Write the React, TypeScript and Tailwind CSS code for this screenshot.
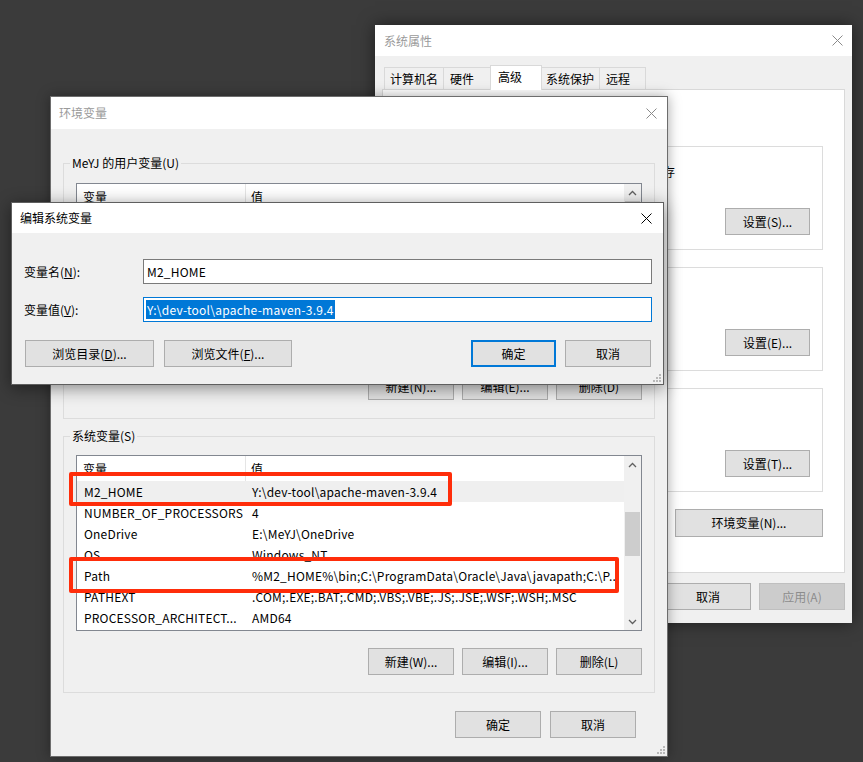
import React from 'react';

type Row = [string, string];

const CloseX = ({ color = '#000000' }: { color?: string }) => (
  <svg width="11" height="11" viewBox="0 0 11 11">
    <path d="M0.5 0.5 L10.5 10.5 M10.5 0.5 L0.5 10.5" stroke={color} strokeWidth="1" fill="none" />
  </svg>
);

const Chevron = ({ up }: { up?: boolean }) => (
  <svg width="9" height="6" viewBox="0 0 9 6">
    <path d={up ? 'M1 5 L4.5 1.5 L8 5' : 'M1 1 L4.5 4.5 L8 1'} stroke="#606060" strokeWidth="1.3" fill="none" />
  </svg>
);

const Grip = () => (
  <svg width="9" height="9" viewBox="0 0 9 9" fill="#b8b8b8" className="absolute right-[2px] bottom-[2px]">
    <rect x="7" y="1" width="2" height="2" />
    <rect x="4" y="4" width="2" height="2" />
    <rect x="7" y="4" width="2" height="2" />
    <rect x="1" y="7" width="2" height="2" />
    <rect x="4" y="7" width="2" height="2" />
    <rect x="7" y="7" width="2" height="2" />
  </svg>
);

const Btn = ({
  children,
  className = '',
  primary,
  disabled,
}: {
  children: React.ReactNode;
  className?: string;
  primary?: boolean;
  disabled?: boolean;
}) => (
  <button
    className={`h-[27px] shrink-0 flex items-center justify-center text-[12px] ${
      primary
        ? 'bg-[#e1e1e1] border-2 border-[#0078d7] text-black'
        : disabled
        ? 'bg-[#cccccc] border border-[#bfbfbf] text-[#8c8c8c]'
        : 'bg-[#e1e1e1] border border-[#adadad] text-black'
    } ${className}`}
  >
    {children}
  </button>
);

const VarList = ({
  rows,
  selected,
  className = '',
  thumbClass,
  children,
}: {
  rows: Row[];
  selected?: number;
  className?: string;
  thumbClass: string;
  children?: React.ReactNode;
}) => (
  <div className={`relative flex border border-[#828790] bg-white ${className}`}>
    <div className="flex-1 flex flex-col overflow-hidden">
      <div className="h-[25px] flex shrink-0">
        <div className="w-[169px] pl-[6px] border-r border-[#e5e5e5] flex items-center">变量</div>
        <div className="pl-[5px] flex items-center">值</div>
      </div>
      {rows.map(([name, value], i) => (
        <div
          key={name}
          className={`h-[21px] flex items-center shrink-0 tracking-[0.2px] ${i === selected ? 'bg-[#efefef]' : ''}`}
        >
          <div className="w-[169px] pl-[7px] whitespace-nowrap overflow-hidden">{name}</div>
          <div className="pl-[6px] whitespace-nowrap overflow-hidden">{value}</div>
        </div>
      ))}
    </div>
    {/* scrollbar */}
    <div className="w-[17px] bg-[#f0f0f0] flex flex-col shrink-0">
      <div className="h-[17px] flex items-center justify-center">
        <Chevron up />
      </div>
      <div className="flex-1">
        <div className={`mx-[1px] bg-[#cdcdcd] ${thumbClass}`} />
      </div>
      <div className="h-[17px] flex items-center justify-center">
        <Chevron />
      </div>
    </div>
    {children}
  </div>
);

const userRows: Row[] = [
  ['OneDrive', 'E:\\MeYJ\\OneDrive'],
  ['Path', 'C:\\Users\\MeYJ\\AppData\\Local\\Microsoft\\WindowsApps;'],
  ['TEMP', 'C:\\Users\\MeYJ\\AppData\\Local\\Temp'],
  ['TMP', 'C:\\Users\\MeYJ\\AppData\\Local\\Temp'],
];

const sysRows: Row[] = [
  ['M2_HOME', 'Y:\\dev-tool\\apache-maven-3.9.4'],
  ['NUMBER_OF_PROCESSORS', '4'],
  ['OneDrive', 'E:\\MeYJ\\OneDrive'],
  ['OS', 'Windows_NT'],
  ['Path', '%M2_HOME%\\bin;C:\\ProgramData\\Oracle\\Java\\javapath;C:\\P...'],
  ['PATHEXT', '.COM;.EXE;.BAT;.CMD;.VBS;.VBE;.JS;.JSE;.WSF;.WSH;.MSC'],
  ['PROCESSOR_ARCHITECT...', 'AMD64'],
];

const SystemWindow = () => (
  <div className="absolute left-[375px] top-[25px] w-[477px] h-[598px] flex flex-col bg-[#f0f0f0] shadow-[0_0_16px_rgba(0,0,0,0.5)]">
    <div className="h-[31px] shrink-0 bg-white flex items-center justify-between pl-[9px] pr-[9px]">
      <span className="text-[#9a9a9a]">系统属性</span>
      <CloseX color="#8a8a8a" />
    </div>
    <div className="flex-1 flex flex-col px-[7px] pt-[9px]">
      <div className="h-[25px] flex items-end pl-[2px]">
        <div className="w-[60px] h-[23px] border border-b-0 border-[#d9d9d9] flex items-center pl-[5px]">计算机名</div>
        <div className="w-[48px] h-[23px] -ml-px border border-b-0 border-[#d9d9d9] flex items-center pl-[6px]">硬件</div>
        <div className="relative z-10 w-[52px] h-[25px] -ml-px border border-b-0 border-[#d9d9d9] bg-white flex items-center pl-[7px] pb-[3px]">高级</div>
        <div className="w-[59px] h-[23px] -ml-px border border-b-0 border-[#d9d9d9] flex items-center pl-[4px]">系统保护</div>
        <div className="w-[47px] h-[23px] -ml-px border border-b-0 border-[#d9d9d9] flex items-center pl-[6px]">远程</div>
      </div>
      <div className="-mt-px h-[484px] bg-white border border-[#d9d9d9] flex flex-col pl-[11px] pr-[21px] pt-[11px]">
        <div className="h-[16px] pl-[6px] whitespace-nowrap">要进行大多数更改，你必须作为管理员登录。</div>
        <div className="mt-[29px] h-[104px] border border-[#dcdcdc] flex flex-col">
          <div className="pt-[17px] pl-[16px] whitespace-nowrap">视觉效果，处理器计划，内存使用，以及虚拟内存</div>
          <div className="flex-1" />
          <div className="flex justify-end pr-[12px] pb-[14px]">
            <Btn className="w-[85px]">设置(S)...</Btn>
          </div>
        </div>
        <div className="mt-[17px] h-[104px] border border-[#dcdcdc] flex flex-col">
          <div className="pt-[17px] pl-[16px] whitespace-nowrap">与登录帐户相关的桌面设置</div>
          <div className="flex-1" />
          <div className="flex justify-end pr-[12px] pb-[14px]">
            <Btn className="w-[85px]">设置(E)...</Btn>
          </div>
        </div>
        <div className="mt-[17px] h-[104px] border border-[#dcdcdc] flex flex-col">
          <div className="pt-[17px] pl-[16px] whitespace-nowrap">系统启动、系统故障和调试信息</div>
          <div className="flex-1" />
          <div className="flex justify-end pr-[12px] pb-[14px]">
            <Btn className="w-[85px]">设置(T)...</Btn>
          </div>
        </div>
        <div className="mt-[17px] flex justify-end">
          <Btn className="w-[148px] h-[28px]">环境变量(N)...</Btn>
        </div>
      </div>
      <div className="mt-[10px] flex justify-end gap-[8px]">
        <Btn className="w-[86px]">确定</Btn>
        <Btn className="w-[86px]">取消</Btn>
        <Btn className="w-[86px]" disabled>
          应用(A)
        </Btn>
      </div>
    </div>
  </div>
);

const EnvWindow = () => (
  <div className="absolute left-[50px] top-[96px] w-[618px] h-[661px] flex flex-col border border-[#6d6d6d] bg-[#f0f0f0] shadow-[0_0_12px_rgba(0,0,0,0.35)]">
    <div className="h-[32px] shrink-0 bg-white flex items-center justify-between pl-[8px] pr-[10px]">
      <span className="text-[#9a9a9a]">环境变量</span>
      <CloseX color="#8a8a8a" />
    </div>
    <div className="flex-1 flex flex-col px-[12px] pt-[26px]">
      <fieldset className="border border-[#dcdcdc] p-0 m-0 min-w-0">
        <legend className="ml-[6px] px-[2px] leading-[16px]">MeYJ 的用户变量(U)</legend>
        <div className="px-[12px] pt-[12px] pb-[18px] flex flex-col">
          <VarList rows={userRows} className="h-[177px]" thumbClass="h-[70px]" />
          <div className="mt-[13px] flex justify-end gap-[8px]">
            <Btn className="w-[86px]">新建(N)...</Btn>
            <Btn className="w-[86px]">编辑(E)...</Btn>
            <Btn className="w-[86px]">删除(D)</Btn>
          </div>
        </div>
      </fieldset>
      <fieldset className="mt-[9px] border border-[#dcdcdc] p-0 m-0 min-w-0">
        <legend className="ml-[6px] px-[2px] leading-[16px]">系统变量(S)</legend>
        <div className="px-[12px] pt-[11px] pb-[17px] flex flex-col">
          <VarList rows={sysRows} selected={0} className="h-[176px]" thumbClass="mt-[39px] h-[44px]">
            <div className="absolute left-[-8px] top-[16px] w-[383px] h-[34px] border-4 border-[#ff2d0a] rounded-[2px]" />
            <div className="absolute left-[-8px] top-[101px] w-[550px] h-[36px] border-4 border-[#ff2d0a] rounded-[2px]" />
          </VarList>
          <div className="mt-[17px] flex justify-end gap-[8px]">
            <Btn className="w-[86px]">新建(W)...</Btn>
            <Btn className="w-[86px]">编辑(I)...</Btn>
            <Btn className="w-[86px]">删除(L)</Btn>
          </div>
        </div>
      </fieldset>
      <div className="mt-[18px] pr-[19px] flex justify-end gap-[9px]">
        <Btn className="w-[86px]">确定</Btn>
        <Btn className="w-[86px]">取消</Btn>
      </div>
    </div>
    <Grip />
  </div>
);

const EditDialog = () => (
  <div className="absolute left-[11px] top-[202px] w-[653px] h-[183px] flex flex-col border border-[#5f5f5f] bg-[#f0f0f0] shadow-[0_3px_16px_rgba(0,0,0,0.45)]">
    <div className="h-[30px] shrink-0 bg-white flex items-center justify-between pl-[8px] pr-[11px]">
      <span>编辑系统变量</span>
      <CloseX />
    </div>
    <div className="flex-1 flex flex-col pl-[12px] pr-[11px] pt-[26px]">
      <div className="flex items-center h-[25px]">
        <div className="w-[119px]">
          变量名(<span className="underline">N</span>):
        </div>
        <div className="flex-1 h-[25px] bg-white border border-[#7a7a7a] flex items-center pl-[3px] tracking-[0.2px]">M2_HOME</div>
      </div>
      <div className="mt-[13px] flex items-center h-[25px]">
        <div className="w-[119px]">
          变量值(<span className="underline">V</span>):
        </div>
        <div className="flex-1 h-[25px] bg-white border border-[#0078d7] flex items-center pl-[2px]">
          <span className="bg-[#0078d7] text-white leading-[19px] px-px tracking-[0.25px]">Y:\dev-tool\apache-maven-3.9.4</span>
        </div>
      </div>
      <div className="mt-[18px] flex items-center">
        <Btn className="ml-px w-[129px]">
          浏览目录(<span className="underline">D</span>)...
        </Btn>
        <Btn className="ml-[10px] w-[128px]">
          浏览文件(<span className="underline">F</span>)...
        </Btn>
        <div className="flex-1" />
        <Btn primary className="w-[85px]">
          确定
        </Btn>
        <Btn className="ml-[9px] mr-px w-[86px]">取消</Btn>
      </div>
    </div>
    <Grip />
  </div>
);

export default function App() {
  return (
    <div className="relative w-[863px] h-[762px] overflow-hidden bg-[#3b3b3b] font-['Segoe_UI','Noto_Sans_CJK_SC',sans-serif] text-[12px] leading-[16px] text-black">
      <SystemWindow />
      <EnvWindow />
      <EditDialog />
    </div>
  );
}
